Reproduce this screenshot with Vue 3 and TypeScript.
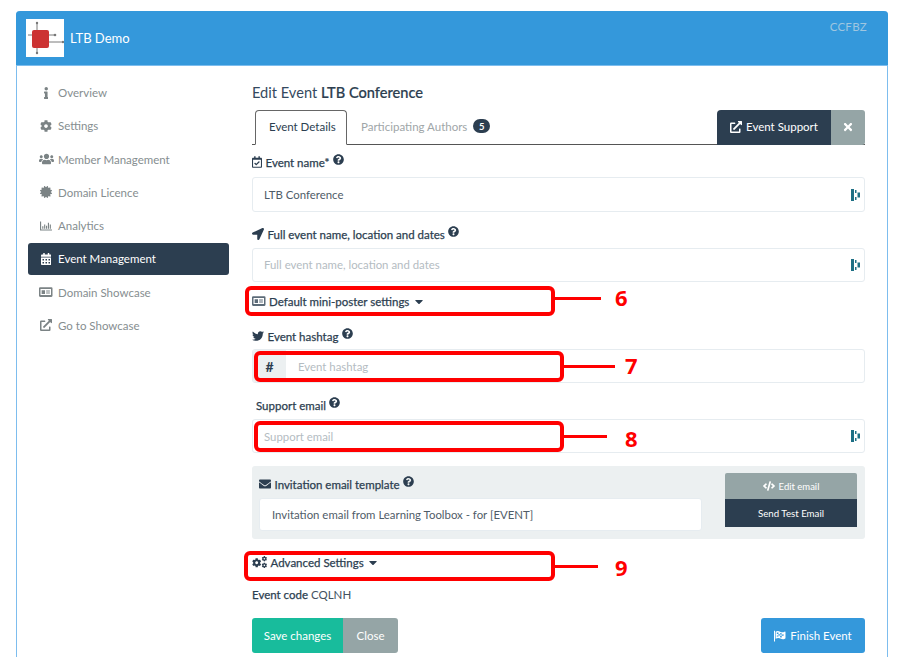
<script setup lang="ts">
import { defineComponent, h } from 'vue'

type Part = { d: string; transform?: string }
type Glyph = { box: string; parts: Part[] }

const cog = 'M487.4 315.7l-42.6-24.6c4.3-23.2 4.3-47 0-70.2l42.6-24.6c4.9-2.8 7.1-8.6 5.5-14-11.1-35.6-30-67.8-54.7-94.6-3.8-4.1-10-5.1-14.8-2.3L380.8 110c-17.9-15.4-38.5-27.3-60.8-35.1V25.8c0-5.6-3.9-10.5-9.4-11.7-36.7-8.2-74.3-7.8-109.2 0-5.5 1.2-9.4 6.1-9.4 11.7V75c-22.2 7.9-42.8 19.8-60.8 35.1L88.7 85.5c-4.9-2.8-11-1.9-14.8 2.3-24.7 26.7-43.6 58.9-54.7 94.6-1.7 5.4.6 11.2 5.5 14L67.3 221c-4.3 23.2-4.3 47 0 70.2l-42.6 24.6c-4.9 2.8-7.1 8.6-5.5 14 11.1 35.6 30 67.8 54.7 94.6 3.8 4.1 10 5.1 14.8 2.3l42.6-24.6c17.9 15.4 38.5 27.3 60.8 35.1v49.2c0 5.6 3.9 10.5 9.4 11.7 36.7 8.2 74.3 7.8 109.2 0 5.5-1.2 9.4-6.1 9.4-11.7v-49.2c22.2-7.9 42.8-19.8 60.8-35.1l42.6 24.6c4.9 2.8 11 1.9 14.8-2.3 24.7-26.7 43.6-58.9 54.7-94.6 1.5-5.5-.7-11.3-5.6-14.1zM256 336c-44.1 0-80-35.9-80-80s35.9-80 80-80 80 35.9 80 80-35.9 80-80 80z'

const glyphs: Record<string, Glyph> = {
  info: { box: '0 0 192 512', parts: [{ d: 'M20 424.229h20V279.771H20c-11.046 0-20-8.954-20-20V212c0-11.046 8.954-20 20-20h112c11.046 0 20 8.954 20 20v212.229h20c11.046 0 20 8.954 20 20V492c0 11.046-8.954 20-20 20H20c-11.046 0-20-8.954-20-20v-47.771c0-11.046 8.954-20 20-20zM96 0C56.235 0 24 32.235 24 72s32.235 72 72 72 72-32.235 72-72S135.764 0 96 0z' }] },
  cog: { box: '0 0 512 512', parts: [{ d: cog }] },
  users: { box: '0 0 640 512', parts: [{ d: 'M96 224c35.3 0 64-28.7 64-64s-28.7-64-64-64-64 28.7-64 64 28.7 64 64 64zm448 0c35.3 0 64-28.7 64-64s-28.7-64-64-64-64 28.7-64 64 28.7 64 64 64zm32 32h-64c-17.6 0-33.5 7.1-45.1 18.6 40.3 22.1 68.9 62 75.1 109.4h66c17.7 0 32-14.3 32-32v-32c0-35.3-28.7-64-64-64zm-256 0c61.9 0 112-50.1 112-112S381.9 32 320 32 208 82.1 208 144s50.1 112 112 112zm76.8 32h-8.3c-20.8 10-43.9 16-68.5 16s-47.6-6-68.5-16h-8.3C179.6 288 128 339.6 128 403.2V432c0 26.5 21.5 48 48 48h288c26.5 0 48-21.5 48-48v-28.8c0-63.6-51.6-115.2-115.2-115.2zm-223.7-13.4C161.5 263.1 145.6 256 128 256H64c-35.3 0-64 28.7-64 64v32c0 17.7 14.3 32 32 32h65.9c6.3-47.4 34.9-87.3 75.2-109.4z' }] },
  certificate: { box: '0 0 512 512', parts: [{ d: 'M458.622 255.92l45.985-45.005c13.708-12.977 7.316-36.039-10.664-40.339l-62.65-15.99 17.661-62.015c4.991-17.838-11.829-34.663-29.661-29.671l-61.994 17.667-15.984-62.671C337.085.197 313.765-6.276 300.99 7.228L256 53.57 211.011 7.229c-12.63-13.351-36.047-7.234-40.325 10.668l-15.984 62.671-61.995-17.667C74.87 57.907 58.056 74.738 63.046 92.572l17.661 62.015-62.65 15.99C.069 174.878-6.31 197.944 7.392 210.915l45.985 45.005-45.985 45.004c-13.708 12.977-7.316 36.039 10.664 40.339l62.65 15.99-17.661 62.015c-4.991 17.838 11.829 34.663 29.661 29.671l61.994-17.667 15.984 62.671c4.439 18.575 27.696 24.018 40.325 10.668L256 458.61l44.989 46.001c12.5 13.488 35.987 7.486 40.325-10.668l15.984-62.671 61.994 17.667c17.836 4.994 34.651-11.837 29.661-29.671l-17.661-62.015 62.65-15.99c17.987-4.302 24.366-27.367 10.664-40.339l-45.984-45.004z' }] },
  chart: { box: '0 0 512 512', parts: [{ d: 'M500 400c6.6 0 12 5.4 12 12v24c0 6.6-5.4 12-12 12H12c-6.6 0-12-5.4-12-12V76c0-6.6 5.4-12 12-12h24c6.6 0 12 5.4 12 12v324zM96 270h48v100H96zM176 190h48v180h-48zM256 250h48v120h-48zM336 120h48v250h-48zM416 190h48v180h-48z' }] },
  calendar: { box: '0 0 448 512', parts: [{ d: 'M0 464c0 26.5 21.5 48 48 48h352c26.5 0 48-21.5 48-48V192H0v272zm320-196c0-6.6 5.4-12 12-12h40c6.6 0 12 5.4 12 12v40c0 6.6-5.4 12-12 12h-40c-6.6 0-12-5.4-12-12v-40zm0 128c0-6.6 5.4-12 12-12h40c6.6 0 12 5.4 12 12v40c0 6.6-5.4 12-12 12h-40c-6.6 0-12-5.4-12-12v-40zM192 268c0-6.6 5.4-12 12-12h40c6.6 0 12 5.4 12 12v40c0 6.6-5.4 12-12 12h-40c-6.6 0-12-5.4-12-12v-40zm0 128c0-6.6 5.4-12 12-12h40c6.6 0 12 5.4 12 12v40c0 6.6-5.4 12-12 12h-40c-6.6 0-12-5.4-12-12v-40zM64 268c0-6.6 5.4-12 12-12h40c6.6 0 12 5.4 12 12v40c0 6.6-5.4 12-12 12H76c-6.6 0-12-5.4-12-12v-40zm0 128c0-6.6 5.4-12 12-12h40c6.6 0 12 5.4 12 12v40c0 6.6-5.4 12-12 12H76c-6.6 0-12-5.4-12-12v-40zM400 64h-48V16c0-8.8-7.2-16-16-16h-32c-8.8 0-16 7.2-16 16v48H160V16c0-8.8-7.2-16-16-16h-32c-8.8 0-16 7.2-16 16v48H48C21.5 64 0 85.5 0 112v48h448v-48c0-26.5-21.5-48-48-48z' }] },
  calcheck: { box: '0 0 448 512', parts: [{ d: 'M400 64h-48V12c0-6.6-5.4-12-12-12h-40c-6.6 0-12 5.4-12 12v52H160V12c0-6.6-5.4-12-12-12h-40c-6.6 0-12 5.4-12 12v52H48C21.5 64 0 85.5 0 112v352c0 26.5 21.5 48 48 48h352c26.5 0 48-21.5 48-48V112c0-26.5-21.5-48-48-48zM54 464c-3.300 0-6-2.700-6-6V160h352v298c0 3.300-2.700 6-6 6zM341.200 263.300L198.500 404.800c-4.700 4.700-12.300 4.600-17 0l-75-75.600c-4.700-4.700-4.600-12.300 0-17l22.700-22.500c4.700-4.700 12.300-4.600 17 0l44 44.400 111.500-110.600c4.700-4.700 12.300-4.600 17 0l22.500 22.700c4.700 4.700 4.600 12.300 0 17z' }] },
  idcard: { box: '0 0 576 512', parts: [{ d: 'M48 48h480a48 48 0 0 1 48 48v320a48 48 0 0 1-48 48H48a48 48 0 0 1-48-48V96a48 48 0 0 1 48-48zM64 128v256h448V128zM112 176h144v160H112zM304 192h160v40H304zM304 280h160v40H304z' }] },
  external: { box: '0 0 512 512', parts: [{ d: 'M432 320h-32a16 16 0 0 0-16 16v112H64V128h144a16 16 0 0 0 16-16V80a16 16 0 0 0-16-16H48A48 48 0 0 0 0 112v352a48 48 0 0 0 48 48h352a48 48 0 0 0 48-48V336a16 16 0 0 0-16-16zM488 0H360c-21.37 0-32.05 25.91-17 41l35.73 35.73L135 320.37a24 24 0 0 0 0 34L157.67 377a24 24 0 0 0 34 0l243.61-243.68L471 169c15 15 41 4.5 41-17V24a24 24 0 0 0-24-24z' }] },
  arrow: { box: '0 0 512 512', parts: [{ d: 'M444.52 3.52L28.74 195.42c-47.97 22.39-31.98 92.75 19.19 92.75h175.91v175.91c0 51.17 70.36 67.17 92.75 19.19l191.9-415.78c15.99-38.39-25.59-79.97-63.97-63.97z' }] },
  twitter: { box: '0 0 512 512', parts: [{ d: 'M459.37 151.716c.325 4.548.325 9.097.325 13.645 0 138.72-105.583 298.558-298.558 298.558-59.452 0-114.68-17.219-161.137-47.106 8.447.974 16.568 1.299 25.34 1.299 49.055 0 94.213-16.568 130.274-44.832-46.132-.975-84.792-31.188-98.112-72.772 6.498.974 12.995 1.624 19.818 1.624 9.421 0 18.843-1.3 27.614-3.573-48.081-9.747-84.143-51.98-84.143-102.985v-1.299c13.969 7.797 30.214 12.67 47.431 13.319-28.264-18.843-46.781-51.005-46.781-87.391 0-19.492 5.197-37.36 14.294-52.954 51.655 63.675 129.3 105.258 216.365 109.807-1.624-7.797-2.599-15.918-2.599-24.04 0-57.828 46.782-104.934 104.934-104.934 30.213 0 57.502 12.67 76.67 33.137 23.715-4.548 46.456-13.32 66.599-25.34-7.798 24.366-24.366 44.833-46.132 57.827 21.117-2.273 41.584-8.122 60.426-16.243-14.292 20.791-32.161 39.308-52.628 54.253z' }] },
  help: { box: '0 0 512 512', parts: [{ d: 'M504 256c0 136.997-111.043 248-248 248S8 392.997 8 256C8 119.083 119.043 8 256 8s248 111.083 248 248zM262.655 90c-54.497 0-89.255 22.957-116.549 63.758-3.536 5.286-2.353 12.415 2.715 16.258l34.699 26.31c5.205 3.947 12.621 3.008 16.665-2.122 17.864-22.658 30.113-35.797 57.303-35.797 20.429 0 45.698 13.148 45.698 32.958 0 14.976-12.363 22.667-32.534 33.976C247.128 238.528 216 254.941 216 296v4c0 6.627 5.373 12 12 12h56c6.627 0 12-5.373 12-12v-1.333c0-28.462 83.186-29.647 83.186-106.667 0-58.002-60.165-102-116.531-102zM256 338c-25.365 0-46 20.635-46 46 0 25.364 20.635 46 46 46s46-20.636 46-46c0-25.365-20.635-46-46-46z' }] },
  envelope: { box: '0 0 512 512', parts: [{ d: 'M502.3 190.8c3.9-3.1 9.7-.2 9.7 4.7V400c0 26.5-21.5 48-48 48H48c-26.5 0-48-21.5-48-48V195.6c0-5 5.7-7.8 9.7-4.7 22.4 17.4 52.1 39.5 154.1 113.6 21.1 15.4 56.7 47.8 92.2 47.6 35.7.3 72-32.8 92.3-47.6 102-74.1 131.6-96.3 154-113.7zM256 320c23.2.4 56.6-29.2 73.4-41.4 132.7-96.3 142.8-104.7 173.4-128.7 5.8-4.5 9.2-11.5 9.2-18.9v-19c0-26.5-21.5-48-48-48H48C21.5 64 0 85.5 0 112v19c0 7.4 3.4 14.3 9.2 18.9 30.6 23.9 40.7 32.4 173.4 128.7 16.8 12.2 50.2 41.8 73.4 41.4z' }] },
  times: { box: '0 0 352 512', parts: [{ d: 'M242.72 256l100.07-100.07c12.28-12.28 12.28-32.19 0-44.48l-22.24-22.24c-12.28-12.28-32.19-12.28-44.48 0L176 189.28 75.93 89.21c-12.28-12.28-32.19-12.28-44.48 0L9.21 111.45c-12.28 12.28-12.28 32.19 0 44.48L109.28 256 9.21 356.07c-12.28 12.28-12.28 32.19 0 44.48l22.24 22.24c12.28 12.28 32.2 12.28 44.48 0L176 322.72l100.07 100.07c12.28 12.28 32.2 12.28 44.48 0l22.24-22.24c12.28-12.28 12.28-32.19 0-44.48L242.72 256z' }] },
  caret: { box: '0 0 320 512', parts: [{ d: 'M31.3 192h257.3c17.8 0 26.7 21.5 14.1 34.1L174.1 354.8c-7.8 7.8-20.5 7.8-28.3 0L17.2 226.1C4.6 213.5 13.5 192 31.3 192z' }] },
  code: { box: '0 0 640 512', parts: [{ d: 'M278.9 511.5l-61-17.7c-6.4-1.8-10-8.5-8.2-14.9L346.2 8.7c1.8-6.4 8.5-10 14.9-8.2l61 17.7c6.4 1.8 10 8.5 8.2 14.9L293.8 503.3c-1.9 6.4-8.5 10.1-14.9 8.2zm-114-112.2l43.5-46.4c4.6-4.9 4.3-12.7-.8-17.2L117 256l90.6-79.7c5.1-4.5 5.5-12.3.8-17.2l-43.5-46.4c-4.5-4.8-12.1-5.1-17-.5L3.8 247.2c-5.1 4.7-5.1 12.8 0 17.5l144.1 135.1c4.9 4.6 12.5 4.4 17-.5zm327.2.6l144.1-135.1c5.1-4.7 5.1-12.8 0-17.5L492.1 112.1c-4.8-4.5-12.4-4.3-17 .5L431.6 159c-4.6 4.9-4.3 12.7.8 17.2L523 256l-90.6 79.7c-5.1 4.5-5.5 12.3-.8 17.2l43.5 46.4c4.5 4.9 12.1 5.1 17 .6z' }] },
  flag: { box: '0 0 512 512', parts: [{ d: 'M0 30h44v460H0zM70 70c70-50 130-30 190 0s120 40 190 0c25-14 40-5 40 20v250c0 15-10 25-25 32-70 35-130 25-190-5s-120-35-205 5zM120 110v60h70v-65c-25-5-50-3-70 5zM260 130v60h70v-50c-25 0-48-4-70-10zM190 170v60h70v-40c-25-10-48-17-70-20zM330 190v60h80v-70c-25 7-55 10-80 10zM120 230v60c20-8 45-12 70-10v-50zM260 250v55c25 8 45 10 70 12v-67z' }] },
  cogs: { box: '0 0 640 512', parts: [
    { d: cog, transform: 'translate(0 90) scale(.78)' },
    { d: cog, transform: 'translate(410 0) scale(.46)' },
    { d: cog, transform: 'translate(410 280) scale(.46)' }
  ] }
}

const Ico = defineComponent({
  props: { name: { type: String, required: true } },
  setup(props) {
    return () => {
      const g = glyphs[props.name]
      return h('svg', { viewBox: g.box, fill: 'currentColor', 'aria-hidden': 'true' },
        g.parts.map(p => h('path', { d: p.d, transform: p.transform, 'fill-rule': 'evenodd' })))
    }
  }
})

const nav = [
  { icon: 'info', label: 'Overview' },
  { icon: 'cog', label: 'Settings' },
  { icon: 'users', label: 'Member Management' },
  { icon: 'certificate', label: 'Domain Licence' },
  { icon: 'chart', label: 'Analytics' },
  { icon: 'calendar', label: 'Event Management', active: true },
  { icon: 'idcard', label: 'Domain Showcase' },
  { icon: 'external', label: 'Go to Showcase' }
]

const callouts = [
  { n: '6', box: 'c6' },
  { n: '7', box: 'c7' },
  { n: '8', box: 'c8' },
  { n: '9', box: 'c9' }
]
</script>

<template>
  <div class="page">
    <div class="card">
      <header class="head">
        <div class="logo">
          <svg viewBox="0 0 38 38" width="38" height="38">
            <g stroke="#7a7a7a" stroke-width="1" fill="none">
              <path d="M11 4v30M2 16h27M15 23h22" />
            </g>
            <circle cx="29" cy="16" r="1.300" fill="#777" />
            <circle cx="37" cy="23" r="1.200" fill="#777" />
            <circle cx="11" cy="4" r="1.200" fill="#777" />
            <circle cx="11" cy="34" r="1.200" fill="#777" />
            <rect x="6" y="11" width="17" height="18" rx="2" fill="#cc3333" />
          </svg>
        </div>
        <span class="brand">LTB Demo</span>
        <span class="code">CCFBZ</span>
      </header>

      <div class="body">
        <nav class="side">
          <a v-for="item in nav" :key="item.label" class="nav-item" :class="{ active: item.active }">
            <span class="nav-ico"><Ico :name="item.icon" /></span>
            <span>{{ item.label }}</span>
          </a>
        </nav>

        <main class="main">
          <h1 class="title">Edit Event <b>LTB Conference</b></h1>

          <div class="tabs">
            <div class="tab on">Event Details</div>
            <div class="tab">Participating Authors <span class="badge">5</span></div>
            <div class="tab-btns">
              <button class="btn dark support"><Ico name="external" class="i12" /> Event Support</button>
              <button class="btn grey closer"><Ico name="times" class="i12" /></button>
            </div>
          </div>

          <label class="lab l1"><Ico name="calcheck" class="i10" /><span>Event name*</span><Ico name="help" class="q" /></label>
          <div class="field h35">
            <span class="val">LTB Conference</span>
            <svg class="lp" viewBox="0 0 9 12" width="9" height="12"><path d="M0 0h3v12H0zM4 1h1.500v3H4zM4 8h1.500v3H4zM6.500 3.500H9v5H6.500z" fill="#1d6f85" /></svg>
          </div>

          <label class="lab l2"><Ico name="arrow" class="i12" /><span>Full event name, location and dates</span><Ico name="help" class="q" /></label>
          <div class="field f2">
            <span class="ph">Full event name, location and dates</span>
            <svg class="lp" viewBox="0 0 9 12" width="9" height="12"><path d="M0 0h3v12H0zM4 1h1.500v3H4zM4 8h1.500v3H4zM6.500 3.500H9v5H6.500z" fill="#1d6f85" /></svg>
          </div>

          <div class="lab l3"><Ico name="idcard" class="i13 soft" /><span>Default mini-poster settings</span><Ico name="caret" class="caret" /></div>

          <label class="lab l4"><Ico name="twitter" class="i12" /><span>Event hashtag</span><Ico name="help" class="q" /></label>
          <div class="field hash">
            <span class="addon">#</span>
            <span class="ph in">Event hashtag</span>
          </div>

          <label class="lab l5"><span>Support email</span><Ico name="help" class="q" /></label>
          <div class="field f5">
            <span class="ph">Support email</span>
            <svg class="lp" viewBox="0 0 9 12" width="9" height="12"><path d="M0 0h3v12H0zM4 1h1.500v3H4zM4 8h1.500v3H4zM6.500 3.500H9v5H6.500z" fill="#1d6f85" /></svg>
          </div>

          <section class="panel">
            <div class="panel-left">
              <label class="lab l6"><Ico name="envelope" class="i12" /><span>Invitation email template</span><Ico name="help" class="q" /></label>
              <div class="tpl">Invitation email from Learning Toolbox - for [EVENT]</div>
            </div>
            <div class="panel-btns">
              <button class="small grey"><Ico name="code" class="i12" /> Edit email</button>
              <button class="small dark">Send Test Email</button>
            </div>
          </section>

          <div class="lab l7"><Ico name="cogs" class="i14" /><span>Advanced Settings</span><Ico name="caret" class="caret" /></div>

          <p class="ecode"><b>Event code</b> CQLNH</p>

          <div class="actions">
            <button class="btn green">Save changes</button>
            <button class="btn grey cl">Close</button>
            <button class="btn blue finish"><Ico name="flag" class="i12" /> Finish Event</button>
          </div>
        </main>
      </div>
    </div>

    <template v-for="c in callouts" :key="c.n">
      <div class="rbox" :class="c.box"></div>
      <div class="rline" :class="c.box"></div>
      <div class="rnum" :class="c.box">{{ c.n }}</div>
    </template>
  </div>
</template>

<style>
html, body { margin: 0; background: #fff; }
</style>

<style scoped>
* { box-sizing: border-box; }
.page {
  position: relative;
  height: 657px;
  width: 912px;
  overflow: hidden;
  padding: 11px 24px 0 16px;
  font-family: Lato, "Open Sans", sans-serif;
  font-size: 11.500px;
  color: #2c3e50;
}
.card {
  height: 700px;
  border: 1px solid #7dbdee;
  border-top: 0;
  border-radius: 4px 4px 0 0;
}
.head {
  display: flex;
  align-items: center;
  height: 55px;
  padding: 0 21px 0 10px;
  background: #3498db;
  border-radius: 4px 4px 0 0;
  margin: 0 -1px;
  border-bottom: 1px solid #7dbdee;
}
.logo { width: 38px; height: 38px; background: #fff; flex: none; }
.logo svg { display: block; }
.brand { margin-left: 6px; color: #fff; font-size: 13px; }
.code { margin-left: auto; align-self: flex-start; margin-top: 9px; color: #9fc6e0; font-size: 11.500px; letter-spacing: .25px; }

.body { display: flex; padding-left: 11px; }
.side { width: 201px; padding-top: 10.500px; display: flex; flex-direction: column; gap: 1.250px; flex: none; }
.nav-item {
  display: flex;
  align-items: center;
  height: 32px;
  border-radius: 3px;
  color: #868e90;
  font-size: 11.500px;
}
.nav-ico { width: 30px; display: flex; justify-content: center; padding-left: 6px; flex: none; }
.nav-ico svg { height: 12px; max-width: 15px; color: #7b8385; }
.nav-item.active { background: #2c3e50; color: #fff; }
.nav-item.active svg { color: #fff; }

.main { width: 613px; margin-left: 23px; padding-top: 17px; flex: none; }
.title { margin: 0 0 7px; font-size: 14.600px; line-height: 20px; font-weight: 400; color: #34495e; }
.title b { color: #2c3e50; font-weight: 500; -webkit-text-stroke: .2px #2c3e50; }

.tabs { position: relative; display: flex; align-items: stretch; height: 35px; border-bottom: 1px solid #555; }
.tab { display: flex; align-items: center; padding: 0 14px 2px; color: #a0a6a8; font-size: 11.500px; }
.tab.on {
  margin-left: 3px;
  width: 92px;
  height: 35px;
  padding: 0 13px 2px;
  color: #2c3e50;
  background: #fff;
  border: 1px solid #666;
  border-bottom-color: #fff;
  border-radius: 4px 4px 0 0;
  white-space: nowrap;
}
.badge {
  display: inline-flex;
  align-items: center;
  justify-content: center;
  width: 17px;
  height: 14px;
  margin-left: 6px;
  border-radius: 7px;
  background: #2c3e50;
  color: #fff;
  font-size: 9.500px;
  font-weight: 700;
}
.tab-btns { margin-left: auto; display: flex; height: 35px; }
.btn {
  display: inline-flex;
  align-items: center;
  justify-content: center;
  gap: 4px;
  border: 0;
  padding: 0;
  color: #fff;
  font-family: inherit;
  font-size: 11.500px;
  border-radius: 3px;
}
.dark { background: #2c3e50; color: #fff; }
.grey { background: #95a5a6; color: #fff; }
.green { background: #18bc9c; }
.blue { background: #3498db; }
.support { width: 114px; padding-bottom: 2px; border-radius: 4px 0 0 0; }
.closer { width: 34px; padding-bottom: 2px; border-radius: 0 3px 3px 0; }
.i10 { width: 10px; height: 12px; flex: none; }
.i12 { width: 12px; height: 12px; flex: none; }
.i13 { width: 13.500px; height: 12px; flex: none; }
.i14 { width: 15px; height: 12px; flex: none; }
.soft { color: #5c6b78; }

.lab {
  display: flex;
  align-items: center;
  gap: 3.500px;
  height: 20px;
  font-size: 11.500px;
  color: #2c3e50;
  -webkit-text-stroke: .25px #2c3e50;
}
.q { width: 11px; height: 11px; margin: -6px 0 0; flex: none; }
.caret { width: 8px; height: 13px; margin-left: 2px; flex: none; }
.l1 { margin: 7px 0 5px; }
.l2 { margin: 12px 0 4px; }
.l3 { margin-top: 9px; }
.l4 { margin: 15px 0 3px; }
.l5 { margin: 12px 0 4px 4px; }
.l6 { margin: 8px 0 4px; }
.l7 { margin: 13px 0 0; }

.field {
  display: flex;
  align-items: center;
  position: relative;
  height: 34px;
  padding-left: 11px;
  background: #fff;
  border: 1px solid #e6ecf0;
  border-radius: 3px;
  font-size: 11.400px;
}
.h35 { height: 35px; }
.f2 { padding-bottom: 2px; }
.val { color: #4f5c68; }
.ph { color: #b4bcc2; }
.lp { position: absolute; right: 4px; top: 50%; transform: translateY(-50%); }
.hash { padding-left: 0; overflow: hidden; }
.addon {
  display: flex;
  align-items: center;
  justify-content: center;
  width: 33px;
  height: 100%;
  background: #ecf0f1;
  font-size: 14px;
  font-weight: 700;
  color: #2c3e50;
}
.in { margin-left: 12px; }

.panel {
  display: flex;
  justify-content: space-between;
  height: 73px;
  margin-top: 13px;
  padding: 0 8px 0 7px;
  background: #ecf0f1;
  border-radius: 3px;
}
.panel-left { width: 443px; }
.tpl {
  display: flex;
  align-items: center;
  height: 33px;
  padding-left: 12px;
  background: #fff;
  border: 1px solid #e6ecf0;
  border-radius: 3px;
  color: #4f5c68;
  font-size: 11.400px;
}
.panel-btns { width: 132px; padding-top: 7px; display: flex; flex-direction: column; }
.small {
  display: flex;
  align-items: center;
  justify-content: center;
  gap: 4px;
  border: 0;
  padding: 0;
  font-family: inherit;
  font-size: 9.500px;
}
.small.grey { height: 26px; border-radius: 2px 2px 0 0; }
.small.dark { height: 28px; font-size: 9.700px; }

.ecode { margin: 13px 0 0; height: 20px; line-height: 20px; font-size: 11.500px; color: #44525f; }
.ecode b { font-weight: 400; -webkit-text-stroke: .25px #2c3e50; color: #2c3e50; }

.actions { display: flex; margin-top: 13px; height: 35px; }
.green { width: 91px; border-radius: 3px 0 0 3px; }
.cl { width: 55px; border-radius: 0 3px 3px 0; }
.finish { width: 104px; margin-left: auto; }

.rbox { position: absolute; border: 4px solid #f00; border-radius: 6px; }
.rline { position: absolute; height: 3px; background: #f00; }
.rnum {
  position: absolute;
  font-family: "Open Sans", sans-serif;
  font-weight: 700;
  font-size: 22px;
  line-height: 24px;
  color: #f00;
}
.rbox.c6 { left: 245px; top: 286px; width: 310px; height: 30px; }
.rline.c6 { left: 555px; top: 297px; width: 46px; }
.rnum.c6 { left: 615px; top: 285px; }
.rbox.c7 { left: 254px; top: 351px; width: 310px; height: 31px; }
.rline.c7 { left: 564px; top: 365px; width: 51px; }
.rnum.c7 { left: 625px; top: 353px; }
.rbox.c8 { left: 254px; top: 421px; width: 310px; height: 31px; }
.rline.c8 { left: 564px; top: 435px; width: 43px; }
.rnum.c8 { left: 625px; top: 426px; }
.rbox.c9 { left: 244px; top: 551px; width: 311px; height: 30px; }
.rline.c9 { left: 555px; top: 565px; width: 43px; }
.rnum.c9 { left: 615px; top: 555px; }
</style>
